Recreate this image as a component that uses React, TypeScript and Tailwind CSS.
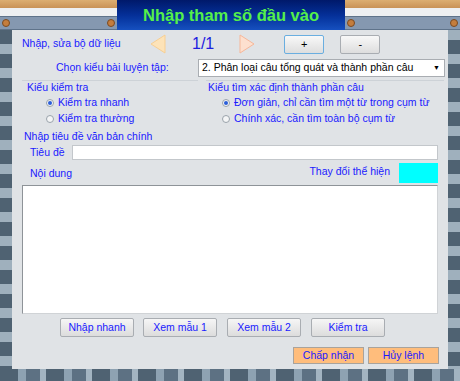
import React from 'react';

const font = { fontFamily: '"Liberation Sans", Arial, sans-serif' };

function Radio({ checked }: { checked?: boolean }) {
  return (
    <span className="w-[8px] h-[8px] rounded-full border border-[#9aa3ab] bg-[#f4f5f6] flex items-center justify-center shrink-0">
      {checked && <span className="w-[4px] h-[4px] rounded-full bg-[#2a5ed8]" />}
    </span>
  );
}

function GrayButton({ label, className = '' }: { label: string; className?: string }) {
  return (
    <div className={`h-[19px] flex items-center justify-center rounded-[2px] border border-[#a9adb2] bg-gradient-to-b from-[#f6f6f6] to-[#dcdcdc] text-[10.5px] text-[#1a1aff] ${className}`}>
      {label}
    </div>
  );
}

function SideDeco() {
  return (
    <div className="h-full flex flex-col">
      <div className="h-[8px] bg-gradient-to-b from-[#dcae72] to-[#c99257]" />
      <div className="h-[8px] bg-[#eef0f2]" />
      <div className="flex-1 flex items-center justify-between bg-[#8598b0] border-y border-[#5f738a] px-[2px]">
        <span className="w-[8px] h-[8px] rounded-full bg-[#c47d3d] border border-[#7a4a22]" />
        <span className="w-[8px] h-[8px] rounded-full bg-[#c47d3d] border border-[#7a4a22]" />
      </div>
    </div>
  );
}

export default function App() {
  return (
    <div className="w-[460px] h-[381px] flex flex-col bg-[#e0e3e6] overflow-hidden" style={font}>
      {/* top bar */}
      <div className="h-[30px] flex">
        <div className="w-[117px]">
          <SideDeco />
        </div>
        <div className="flex-1 flex items-center justify-center bg-gradient-to-b from-[#00196a] via-[#052f98] to-[#1650bf]">
          <span className="text-[16.5px] font-bold text-[#55f04a]">Nhập tham số đầu vào</span>
        </div>
        <div className="w-[115px]">
          <SideDeco />
        </div>
      </div>

      <div className="flex-1 flex">
        {/* left strip */}
        <div className="w-[12px] bg-[repeating-linear-gradient(180deg,#4f6272_0px,#4f6272_14px,#9fb0bd_14px,#9fb0bd_24px)]" />

        {/* body */}
        <div className="flex-1 flex flex-col text-[#1a1aff] text-[10.5px] pt-[4px]">
          {/* row 1 */}
          <div className="h-[20px] flex items-center">
            <span className="w-[138px] pl-[10px]">Nhập, sửa bộ dữ liệu</span>
            <svg width="16" height="20" viewBox="0 0 16 20">
              <polygon points="15,1 1,10 15,19" fill="#fde3b8" stroke="#f7cf93" strokeWidth="1" />
            </svg>
            <span className="ml-[26px] text-[16px] text-[#2020e0]">1/1</span>
            <svg width="16" height="20" viewBox="0 0 16 20" className="ml-[25px]">
              <polygon points="1,1 15,10 1,19" fill="#fde0cf" stroke="#f6b79a" strokeWidth="1" />
            </svg>
            <div className="ml-[29px] w-[40px] h-[19px] flex items-center justify-center rounded-[2px] border border-[#6aaee0] bg-gradient-to-b from-[#f8f8f8] to-[#dedede] text-[11px] text-black">+</div>
            <div className="ml-[16px] w-[40px] h-[19px] flex items-center justify-center rounded-[2px] border border-[#a9adb2] bg-gradient-to-b from-[#f8f8f8] to-[#dedede] text-[11px] text-black">-</div>
          </div>

          {/* row 2 */}
          <div className="h-[18px] mt-[5px] flex items-center">
            <span className="w-[186px] pl-[44px]">Chọn kiểu bài luyện tập:</span>
            <div className="w-[247px] h-[18px] flex items-center justify-between bg-white border border-[#a9adb2] pl-[3px] pr-[4px] text-black">
              <span>2. Phân loại câu tổng quát và thành phần câu</span>
              <span className="text-[7px]">▼</span>
            </div>
          </div>

          {/* groups */}
          <div className="flex mt-[3px] h-[44px]">
            <div className="w-[176px] ml-[10px] flex flex-col border-t border-[#cdd2d7]">
              <span className="pl-[5px] leading-[12px]">Kiểu kiểm tra</span>
              <div className="flex items-center gap-[4px] pl-[24px] mt-[3px] h-[14px]">
                <Radio checked />
                <span>Kiểm tra nhanh</span>
              </div>
              <div className="flex items-center gap-[4px] pl-[24px] mt-[2px] h-[14px]">
                <Radio />
                <span>Kiểm tra thường</span>
              </div>
            </div>
            <div className="flex-1 ml-[8px] mr-[4px] flex flex-col border-t border-[#cdd2d7]">
              <span className="pl-[2px] leading-[12px]">Kiểu tìm xác định thành phần câu</span>
              <div className="flex items-center gap-[4px] pl-[16px] mt-[3px] h-[14px]">
                <Radio checked />
                <span>Đơn giản, chỉ cần tìm một từ trong cụm từ</span>
              </div>
              <div className="flex items-center gap-[4px] pl-[16px] mt-[2px] h-[14px]">
                <Radio />
                <span>Chính xác, cần tìm toàn bộ cụm từ</span>
              </div>
            </div>
          </div>

          {/* title section */}
          <span className="mt-[5px] pl-[12px] leading-[14px]">Nhập tiêu đề văn bản chính</span>
          <div className="h-[15px] mt-[2px] flex items-center">
            <span className="w-[60px] pl-[18px]">Tiêu đề</span>
            <div className="w-[366px] h-[15px] bg-white border border-[#c3c7cb]" />
          </div>

          {/* content label + colour */}
          <div className="h-[20px] mt-[3px] flex items-end">
            <span className="pl-[18px] pb-[1px]">Nội dung</span>
            <div className="ml-auto mr-[10px] flex items-center gap-[9px] self-stretch">
              <span className="pb-[2px]">Thay đổi thể hiện</span>
              <div className="w-[39px] h-[20px] bg-[#00ffff]" />
            </div>
          </div>

          {/* textarea */}
          <div className="ml-[10px] mr-[10px] mt-[2px] h-[129px] bg-white border border-[#8e9398] border-r-[#d0d3d6] border-b-[#d0d3d6]" />

          {/* action buttons */}
          <div className="flex mt-[4px] pl-[48px]">
            <GrayButton label="Nhập nhanh" className="w-[74px]" />
            <GrayButton label="Xem mẫu 1" className="w-[74px] ml-[9px]" />
            <GrayButton label="Xem mẫu 2" className="w-[74px] ml-[10px]" />
            <GrayButton label="Kiểm tra" className="w-[74px] ml-[10px]" />
          </div>

          {/* accept/cancel */}
          <div className="flex mt-[10px] pl-[281px]">
            <div className="w-[71px] h-[17px] flex items-center justify-center bg-[#ffbd7c] border border-[#a9a39c] text-[10.5px]">Chấp nhận</div>
            <div className="w-[71px] h-[17px] ml-[4px] flex items-center justify-center bg-[#ffbd7c] border border-[#a9a39c] text-[10.5px]">Hủy lệnh</div>
          </div>
        </div>

        {/* right strip */}
        <div className="w-[12px] bg-[repeating-linear-gradient(180deg,#9fb0bd_0px,#9fb0bd_10px,#4f6272_10px,#4f6272_24px)]" />
      </div>

      {/* bottom strip */}
      <div className="h-[12px] bg-[repeating-linear-gradient(90deg,#4f6272_0px,#4f6272_18px,#8ea2b2_18px,#8ea2b2_26px,#5d7183_26px,#5d7183_40px,#a3b4c1_40px,#a3b4c1_46px)]" />
    </div>
  );
}
